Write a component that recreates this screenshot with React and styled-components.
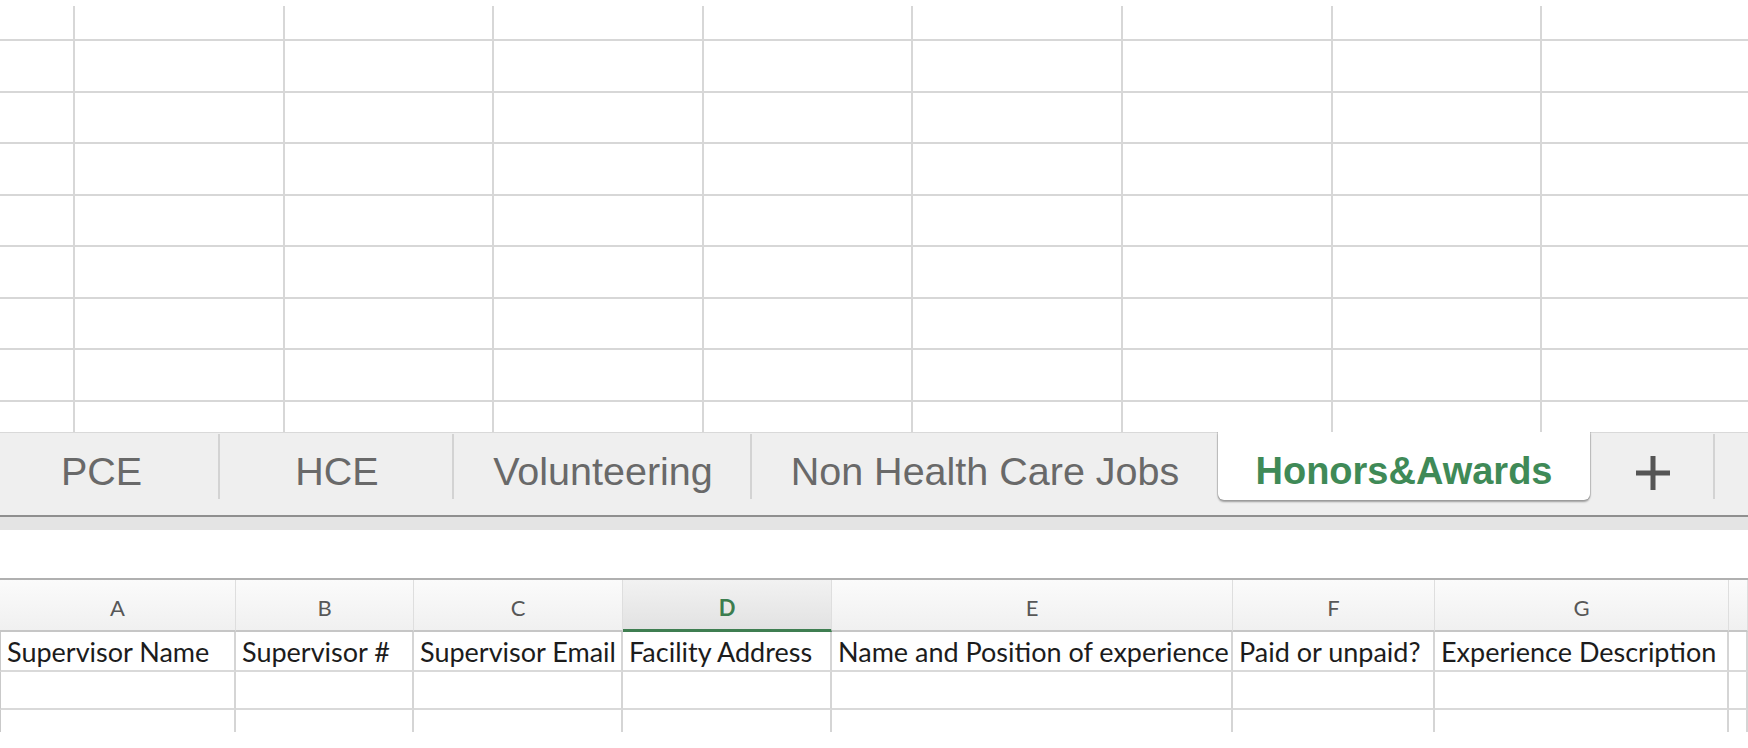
import React from 'react'
import styled, { createGlobalStyle } from 'styled-components'

const GlobalStyle = createGlobalStyle`
  html, body {
    margin: 0;
    padding: 0;
    background: #fff;
    overflow: hidden;
  }
`

const Page = styled.div`
  width: 1748px;
  height: 748px;
  display: flex;
  flex-direction: column;
  background: #fff;
  overflow: hidden;
`

/* ---------- sheet canvas (top) ---------- */

const Canvas = styled.div`
  height: 432px;
  padding-top: 6px;
  box-sizing: border-box;
  flex: none;
`

const CellGrid = styled.div`
  height: 100%;
  display: grid;
  grid-template-columns: 73px repeat(7, 207.6px) 1fr;
  grid-template-rows: 33px repeat(7, 49.5px) 1fr;
  gap: 2px;
  background: #d7d7d7;
`

const Cell = styled.div`
  background: #fff;
`

/* ---------- sheet tabs ---------- */

const TabBar = styled.div`
  flex: none;
  height: 83px;
  overflow: hidden;
  background: #efefef;
  box-shadow: inset 0 1px 0 #d9d9d9;
  border-bottom: 2px solid #8f8f8f;
`

/* strip is scrolled a little, so the first tab runs off the left edge */
const TabStrip = styled.div`
  display: flex;
  align-items: flex-start;
  height: 100%;
  margin-left: -17px;
`

const Tab = styled.div`
  position: relative;
  flex: none;
  width: ${({ $w }) => $w}px;
  height: ${({ $active }) => ($active ? 68 : 83)}px;
  box-sizing: border-box;
  display: flex;
  justify-content: center;
  padding-top: 20px;
  font-family: 'Liberation Sans', Arial, sans-serif;
  font-size: ${({ $active }) => ($active ? 38 : 39.5)}px;
  font-weight: ${({ $active }) => ($active ? 700 : 400)};
  line-height: 1;
  white-space: nowrap;
  color: ${({ $active }) => ($active ? '#3f8a57' : '#696969')};
  background: ${({ $active }) => ($active ? '#fff' : 'transparent')};
  border-radius: ${({ $active }) => ($active ? '0 0 6px 6px' : '0')};
  box-shadow: ${({ $active }) =>
    $active
      ? '0 2px 2px rgba(0,0,0,0.35), -1px 0 1px rgba(0,0,0,0.15), 1px 0 1px rgba(0,0,0,0.15)'
      : 'none'};
  z-index: ${({ $active }) => ($active ? 1 : 0)};

  &::after {
    content: '';
    display: ${({ $divider }) => ($divider ? 'block' : 'none')};
    position: absolute;
    right: 0;
    top: 2px;
    width: 2px;
    height: 65px;
    background: #d3d3d3;
  }
`

const TabFill = styled.div`
  flex: 1;
  height: 83px;
`

const PlusIcon = () => (
  <svg width="34" height="34" viewBox="0 0 34 34" style={{ marginTop: 4 }}>
    <rect x="0" y="14.5" width="34" height="5" fill="#555" />
    <rect x="14.5" y="0" width="5" height="34" fill="#555" />
  </svg>
)

const Shelf = styled.div`
  flex: none;
  height: 13px;
  background: #e4e4e4;
`

const Gap = styled.div`
  flex: none;
  height: 48px;
`

/* ---------- embedded sheet (bottom) ---------- */

const COLS = '236px 178px 209px 209px 401px 202px 294px 1fr'

const Sheet = styled.div`
  flex: none;
  border-top: 2px solid #b0b0b0;
`

const HeaderRow = styled.div`
  display: grid;
  grid-template-columns: ${COLS};
  height: 52px;
`

const ColHead = styled.div`
  box-sizing: border-box;
  display: flex;
  align-items: center;
  justify-content: center;
  padding-top: 6px;
  font-family: Lato, 'Open Sans', sans-serif;
  font-size: 22px;
  line-height: 1;
  font-weight: ${({ $active }) => ($active ? 700 : 400)};
  color: ${({ $active }) => ($active ? '#3c7d4f' : '#575757')};
  background: ${({ $active }) =>
    $active
      ? 'linear-gradient(#f2f2f2, #e2e2e2)'
      : 'linear-gradient(#fbfbfb, #f0f0f0)'};
  border-right: 1px solid #dedede;
  border-bottom: ${({ $active }) =>
    $active ? '3px solid #3f7e51' : '2px solid #c6c6c6'};
`

const Row = styled.div`
  display: grid;
  grid-template-columns: ${COLS};
  height: ${({ $h }) => $h}px;
`

const DataCell = styled.div`
  box-sizing: border-box;
  display: flex;
  align-items: center;
  padding-left: 6px;
  font-family: Lato, 'Open Sans', sans-serif;
  font-size: 27px;
  line-height: 1;
  color: #1c1c1c;
  white-space: nowrap;
  border-right: 2px solid #d5d5d5;
  border-bottom: ${({ $open }) => ($open ? 'none' : '2px solid #d9d9d9')};
  &:first-child {
    border-left: 1px solid #c9c9c9;
  }
`

const tabs = [
  { label: 'PCE', w: 237, divider: true },
  { label: 'HCE', w: 234, divider: true },
  { label: 'Volunteering', w: 298, divider: true },
  { label: 'Non Health Care Jobs', w: 466 },
  { label: 'Honors&Awards', w: 372, active: true },
]

const letters = ['A', 'B', 'C', 'D', 'E', 'F', 'G', '']

const headings = [
  'Supervisor Name',
  'Supervisor #',
  'Supervisor Email',
  'Facility Address',
  'Name and Position of experience',
  'Paid or unpaid?',
  'Experience Description',
  '',
]

const App = () => {
  return (
    <Page>
      <GlobalStyle />

      <Canvas>
        <CellGrid>
          {Array.from({ length: 81 }).map((_, i) => (
            <Cell key={i} />
          ))}
        </CellGrid>
      </Canvas>

      <TabBar>
        <TabStrip>
          {tabs.map(t => (
            <Tab key={t.label} $w={t.w} $active={t.active} $divider={t.divider}>
              {t.label}
            </Tab>
          ))}
          <Tab $w={125} $divider>
            <PlusIcon />
          </Tab>
          <TabFill />
        </TabStrip>
      </TabBar>
      <Shelf />
      <Gap />

      <Sheet>
        <HeaderRow>
          {letters.map((l, i) => (
            <ColHead key={i} $active={l === 'D'}>
              {l}
            </ColHead>
          ))}
        </HeaderRow>
        <Row $h={40}>
          {headings.map((h, i) => (
            <DataCell key={i}>{h}</DataCell>
          ))}
        </Row>
        <Row $h={38}>
          {headings.map((_, i) => (
            <DataCell key={i} />
          ))}
        </Row>
        <Row $h={22}>
          {headings.map((_, i) => (
            <DataCell key={i} $open />
          ))}
        </Row>
      </Sheet>
    </Page>
  )
}

export default App
